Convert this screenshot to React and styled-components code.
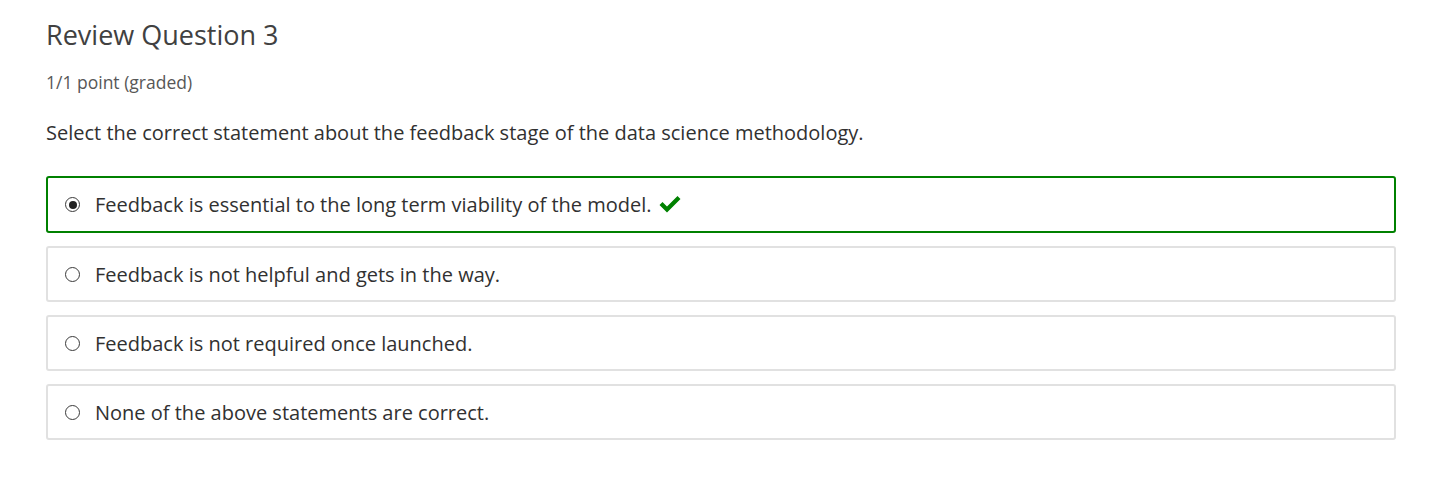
import React from 'react';
import styled, { createGlobalStyle } from 'styled-components';

const GlobalStyle = createGlobalStyle`
  body {
    margin: 0;
    background: #ffffff;
    font-family: "Open Sans", "Noto Sans", sans-serif;
    color: #313131;
  }
`;

const Wrapper = styled.div`
  padding: 17px 47px 40px 46px;
`;

const Title = styled.h3`
  margin: 0;
  font-size: 27px;
  font-weight: 400;
  line-height: 36px;
  color: #414141;
`;

const Points = styled.div`
  margin-top: 17px;
  font-size: 17.5px;
  line-height: 24px;
  color: #575757;
`;

const Prompt = styled.p`
  margin: 25px 0 0 0;
  font-size: 20px;
  line-height: 28px;
  color: #313131;
`;

const Choices = styled.div`
  display: flex;
  flex-direction: column;
  gap: 13px;
  margin-top: 29px;
`;

const Choice = styled.label`
  display: flex;
  align-items: center;
  height: ${p => (p.$correct ? '57px' : '56px')};
  box-sizing: border-box;
  padding: 0 18px;
  border: 2px solid ${p => (p.$correct ? '#008100' : '#e1e1e1')};
  border-radius: 3px;
  font-size: 20px;
  color: #313131;
`;

const Radio = styled.span`
  width: 15px;
  height: 15px;
  box-sizing: border-box;
  border: 1.4px solid #3a3a3a;
  border-radius: 50%;
  margin-right: 15px;
  margin-left: -1px;
  display: flex;
  align-items: center;
  justify-content: center;
  flex-shrink: 0;

  &::after {
    content: '';
    display: ${p => (p.$checked ? 'block' : 'none')};
    width: 8px;
    height: 8px;
    border-radius: 50%;
    background: #222;
  }
`;

const Check = styled.svg`
  width: 22px;
  height: 17px;
  margin-left: 7px;
  fill: #008100;
`;

const choices = [
  { text: 'Feedback is essential to the long term viability of the model.', correct: true },
  { text: 'Feedback is not helpful and gets in the way.' },
  { text: 'Feedback is not required once launched.' },
  { text: 'None of the above statements are correct.' },
];

export default function App() {
  return (
    <Wrapper>
      <GlobalStyle />
      <Title>Review Question 3</Title>
      <Points>1/1 point (graded)</Points>
      <Prompt>Select the correct statement about the feedback stage of the data science methodology.</Prompt>
      <Choices>
        {choices.map(c => (
          <Choice key={c.text} $correct={c.correct}>
            <Radio $checked={c.correct} />
            {c.text}
            {c.correct && (
              <Check viewBox="0 0 22 17">
                <path d="M0.5 9 L3.5 6 L8 10.5 L18.5 0 L21.5 3 L8 16.5 Z" />
              </Check>
            )}
          </Choice>
        ))}
      </Choices>
    </Wrapper>
  );
}
